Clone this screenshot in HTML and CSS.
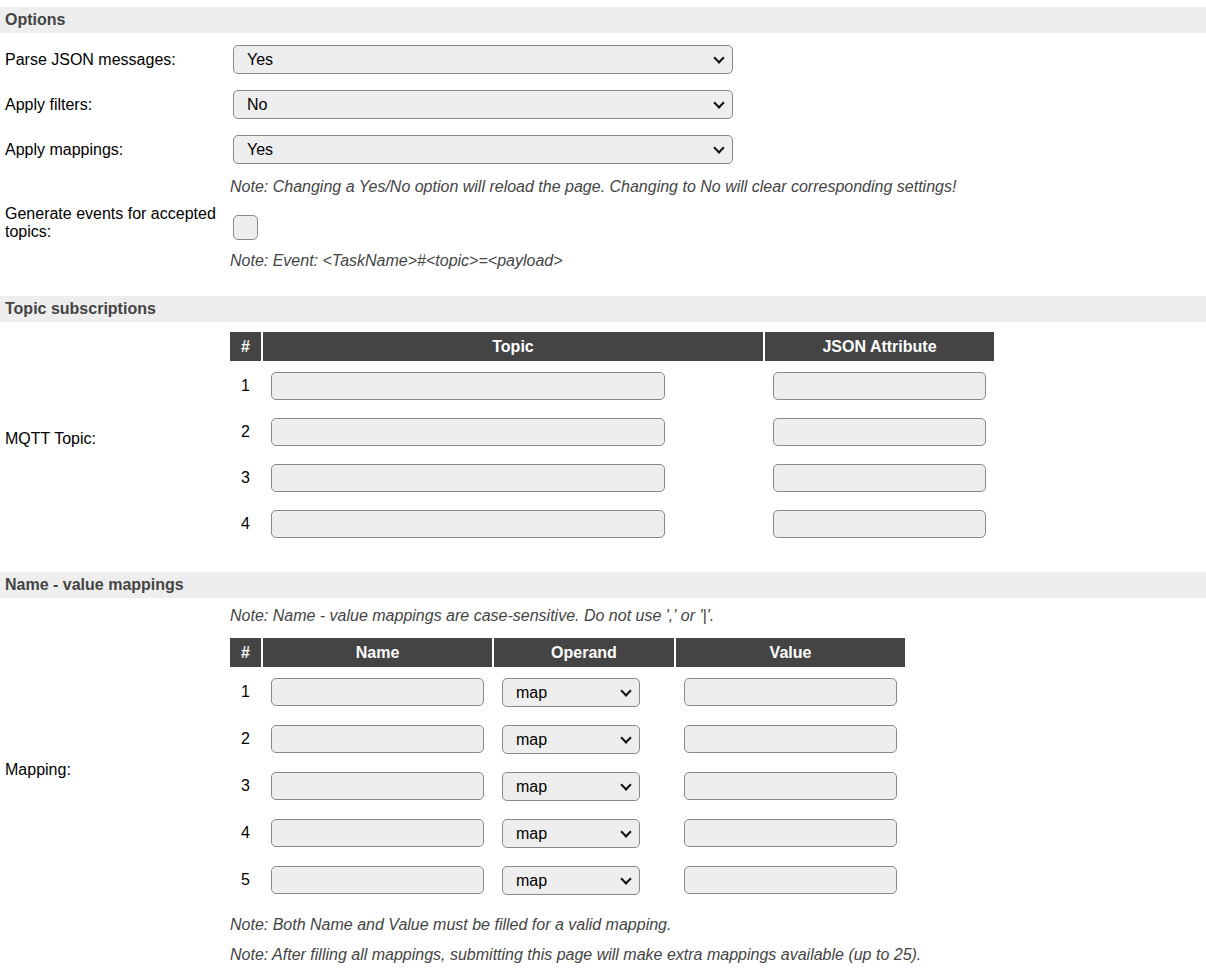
FILE: index.html
```html
<!DOCTYPE html>
<html lang="en">
<head>
  <meta charset="UTF-8">
  <meta name="viewport" content="width=device-width, initial-scale=1.0">
  <title>MQTT Import</title>
  <link rel="stylesheet" href="styles.css">
</head>

<body>

  <form class="settings">

    <!-- Options -->
    <div class="section-title">Options</div>
    <div class="form-grid options">
      <label class="label">Parse JSON messages:</label>
      <div class="field">
        <span class="select-wrap wide">
          <select><option>Yes</option><option>No</option></select>
        </span>
      </div>

      <label class="label">Apply filters:</label>
      <div class="field">
        <span class="select-wrap wide">
          <select><option>No</option><option>Yes</option></select>
        </span>
      </div>

      <label class="label">Apply mappings:</label>
      <div class="field">
        <span class="select-wrap wide">
          <select><option>Yes</option><option>No</option></select>
        </span>
      </div>

      <div></div>
      <div class="note">Note: Changing a Yes/No option will reload the page. Changing to No will clear corresponding settings!</div>

      <label class="label top">Generate events for accepted topics:</label>
      <div class="field top"><input type="checkbox" class="check"></div>

      <div></div>
      <div class="note event-note">Note: Event: &lt;TaskName&gt;#&lt;topic&gt;=&lt;payload&gt;</div>
    </div>

    <!-- Topic subscriptions -->
    <div class="section-title spaced">Topic subscriptions</div>
    <div class="form-grid topics">
      <label class="label">MQTT Topic:</label>
      <div class="sub-table topic-table">
        <div class="th">#</div>
        <div class="th">Topic</div>
        <div class="th">JSON Attribute</div>

        <div class="td num">1</div>
        <div class="td"><input type="text" class="topic-input"></div>
        <div class="td"><input type="text" class="attr-input"></div>

        <div class="td num">2</div>
        <div class="td"><input type="text" class="topic-input"></div>
        <div class="td"><input type="text" class="attr-input"></div>

        <div class="td num">3</div>
        <div class="td"><input type="text" class="topic-input"></div>
        <div class="td"><input type="text" class="attr-input"></div>

        <div class="td num">4</div>
        <div class="td"><input type="text" class="topic-input"></div>
        <div class="td"><input type="text" class="attr-input"></div>
      </div>
    </div>

    <!-- Name - value mappings -->
    <div class="section-title mapping-title">Name - value mappings</div>
    <div class="form-grid mappings">
      <div></div>
      <div class="note first-note">Note: Name - value mappings are case-sensitive. Do not use ',' or '|'.</div>

      <label class="label">Mapping:</label>
      <div class="sub-table map-table">
        <div class="th">#</div>
        <div class="th">Name</div>
        <div class="th">Operand</div>
        <div class="th">Value</div>

        <div class="td num">1</div>
        <div class="td"><input type="text" class="attr-input"></div>
        <div class="td"><span class="select-wrap"><select class="op-select"><option>map</option><option>percentage</option></select></span></div>
        <div class="td"><input type="text" class="attr-input"></div>

        <div class="td num">2</div>
        <div class="td"><input type="text" class="attr-input"></div>
        <div class="td"><span class="select-wrap"><select class="op-select"><option>map</option><option>percentage</option></select></span></div>
        <div class="td"><input type="text" class="attr-input"></div>

        <div class="td num">3</div>
        <div class="td"><input type="text" class="attr-input"></div>
        <div class="td"><span class="select-wrap"><select class="op-select"><option>map</option><option>percentage</option></select></span></div>
        <div class="td"><input type="text" class="attr-input"></div>

        <div class="td num">4</div>
        <div class="td"><input type="text" class="attr-input"></div>
        <div class="td"><span class="select-wrap"><select class="op-select"><option>map</option><option>percentage</option></select></span></div>
        <div class="td"><input type="text" class="attr-input"></div>

        <div class="td num">5</div>
        <div class="td"><input type="text" class="attr-input"></div>
        <div class="td"><span class="select-wrap"><select class="op-select"><option>map</option><option>percentage</option></select></span></div>
        <div class="td"><input type="text" class="attr-input"></div>
      </div>

      <div></div>
      <div class="note bottom-note first">Note: Both Name and Value must be filled for a valid mapping.</div>
      <div></div>
      <div class="note bottom-note">Note: After filling all mappings, submitting this page will make extra mappings available (up to 25).</div>
    </div>

  </form>

</body>
</html>
```

FILE: styles.css
```css
* {
  margin: 0;
  padding: 0;
  box-sizing: border-box;
}

body {
  font-family: "Liberation Sans", Arial, sans-serif;
  font-size: 16px;
  color: #000;
  background: #fff;
}

.settings {
  padding-top: 7px;
}

/* Gray section bands */
.section-title {
  height: 26px;
  line-height: 26px;
  padding-left: 5px;
  background-color: #eee;
  color: #444;
  font-weight: bold;
}

.section-title.spaced {
  margin-top: 22px;
}

.section-title.mapping-title {
  margin-top: 27px;
}

/* Label column + field column */
.form-grid {
  display: grid;
  grid-template-columns: 230px 1fr;
  align-items: center;
}

.form-grid.options {
  padding-top: 4px;
}

.form-grid.topics {
  padding-top: 10px;
}

.label {
  padding-left: 5px;
  padding-right: 10px;
  line-height: 18px;
}

.label.top {
  align-self: start;
  padding-top: 5px;
  padding-bottom: 4px;
}

.field {
  padding: 8px 0;
}

.field.top {
  align-self: start;
  padding: 15px 0 0;
}

.note {
  color: #444;
  font-style: italic;
  line-height: 20px;
  padding: 5px 0 3px;
}

.note.event-note {
  padding: 6px 0 3px;
}

.note.first-note {
  padding: 8px 0 12px;
}

.note.bottom-note {
  padding: 5px 0;
}

.note.bottom-note.first {
  margin-top: 8px;
}

/* Inputs */
input[type="text"],
select {
  font-family: "Liberation Sans", Arial, sans-serif;
  font-size: 16px;
  color: #000;
  background-color: #eee;
  border: 1px solid #888;
  border-radius: 5px;
}

input[type="text"] {
  display: block;
  height: 28px;
  margin-left: 8px;
  padding: 0 8px;
}

.select-wrap {
  position: relative;
  display: inline-block;
  margin-left: 3px;
}

/* dropdown chevron drawn over the select */
.select-wrap::after {
  content: '';
  position: absolute;
  right: 10px;
  top: 9px;
  width: 6px;
  height: 6px;
  border-right: 2px solid #111;
  border-bottom: 2px solid #111;
  transform: rotate(45deg);
  pointer-events: none;
}

select {
  display: block;
  appearance: none;
  -webkit-appearance: none;
  height: 29px;
  padding: 0 28px 0 13px;
}

.wide select {
  width: 500px;
}

.check {
  display: block;
  appearance: none;
  -webkit-appearance: none;
  width: 25px;
  height: 25px;
  margin-left: 3px;
  background-color: #eee;
  border: 1px solid #888;
  border-radius: 5px;
}

/* Dark headed inner tables */
.sub-table {
  display: grid;
  column-gap: 2px;
}

.topic-table {
  grid-template-columns: 31px 500px 229px;
  grid-auto-rows: 46px;
  grid-template-rows: 29px;
}

.map-table {
  grid-template-columns: 31px 229px 180px 229px;
  grid-auto-rows: 47px;
  grid-template-rows: 29px;
}

.th {
  background-color: #444;
  color: #fff;
  font-weight: bold;
  text-align: center;
  line-height: 29px;
}

.td {
  padding-top: 11px;
}

.td.num {
  text-align: center;
  line-height: 28px;
}

.topic-input {
  width: 394px;
}

.attr-input {
  width: 213px;
}

.map-table .select-wrap {
  margin-left: 8px;
}

.op-select {
  width: 138px;
}
```
